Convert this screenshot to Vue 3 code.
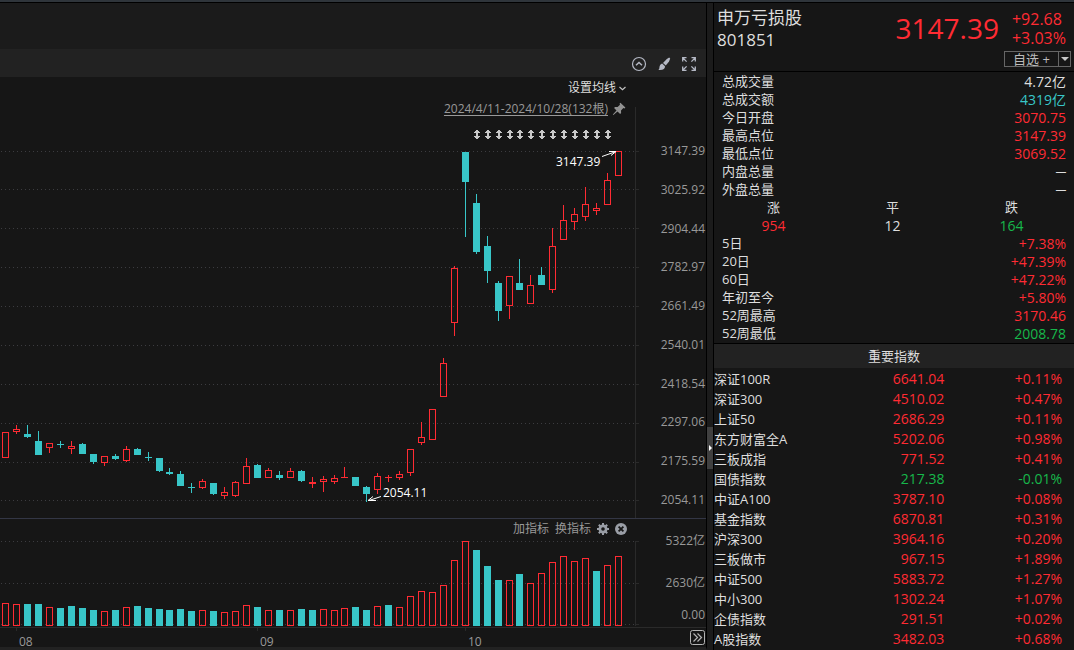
<script setup>
const RISE = 'rise'
const FALL = 'fall'

// [direction, high, body top, body bottom, low, volume direction, volume top]
const sessions = [
  ['r', 432, 432, 458, 458, 'r', 603],
  ['r', 425, 429, 432, 434, 'r', 604],
  ['f', 425, 434, 437, 438, 'f', 604],
  ['f', 431, 441, 455, 455, 'f', 604],
  ['r', 443, 443, 448, 453, 'r', 607],
  ['f', 441, 444, 445, 448, 'f', 608],
  ['r', 441, 446, 449, 454, 'f', 606],
  ['f', 443, 444, 454, 454, 'f', 608],
  ['f', 454, 454, 462, 464, 'f', 610],
  ['r', 456, 456, 463, 466, 'r', 611],
  ['f', 454, 456, 459, 460, 'f', 610],
  ['r', 446, 449, 461, 462, 'r', 607],
  ['f', 448, 449, 455, 455, 'f', 606],
  ['f', 452, 457, 458, 461, 'f', 608],
  ['f', 458, 458, 471, 472, 'f', 609],
  ['f', 468, 472, 474, 475, 'f', 610],
  ['f', 471, 474, 486, 486, 'f', 609],
  ['f', 483, 487, 488, 493, 'f', 611],
  ['r', 479, 481, 488, 489, 'r', 610],
  ['f', 483, 483, 494, 495, 'f', 611],
  ['r', 487, 492, 496, 499, 'r', 612],
  ['r', 481, 482, 496, 497, 'r', 611],
  ['r', 458, 466, 484, 484, 'r', 605],
  ['f', 464, 465, 478, 478, 'f', 607],
  ['r', 468, 470, 478, 478, 'r', 610],
  ['f', 471, 475, 478, 480, 'f', 610],
  ['r', 468, 471, 478, 478, 'r', 610],
  ['f', 470, 471, 481, 482, 'f', 609],
  ['r', 477, 482, 484, 488, 'f', 610],
  ['r', 476, 479, 482, 492, 'r', 609],
  ['r', 475, 478, 482, 484, 'r', 610],
  ['r', 467, 477, 478, 478, 'r', 608],
  ['f', 477, 477, 486, 486, 'f', 607],
  ['f', 486, 487, 494, 502, 'f', 610],
  ['r', 473, 476, 490, 494, 'r', 606],
  ['r', 475, 477, 478, 482, 'f', 605],
  ['r', 471, 474, 478, 480, 'r', 607],
  ['r', 449, 449, 473, 476, 'r', 596],
  ['r', 422, 437, 443, 445, 'r', 591],
  ['r', 409, 409, 440, 440, 'r', 592],
  ['r', 358, 363, 397, 397, 'r', 585],
  ['r', 266, 268, 323, 336, 'r', 560],
  ['f', 152, 152, 182, 237, 'r', 541],
  ['f', 194, 203, 252, 254, 'f', 550],
  ['f', 236, 246, 271, 283, 'f', 566],
  ['f', 281, 283, 311, 321, 'f', 580],
  ['r', 276, 276, 306, 319, 'r', 580],
  ['f', 259, 283, 290, 290, 'f', 574],
  ['r', 275, 285, 304, 304, 'r', 583],
  ['f', 267, 275, 285, 285, 'r', 573],
  ['r', 228, 246, 290, 293, 'r', 562],
  ['r', 205, 220, 240, 240, 'r', 556],
  ['r', 208, 214, 222, 230, 'r', 561],
  ['r', 187, 204, 217, 221, 'r', 558],
  ['r', 203, 208, 211, 215, 'f', 571],
  ['r', 173, 180, 205, 205, 'r', 565],
  ['r', 151, 151, 176, 176, 'r', 556],
].map(([dir, high, top, bottom, low, volDir, volTop], i) => ({
  x: 2 + 11 * i - Math.floor((i + 1) / 16),
  dir: dir === 'r' ? RISE : FALL,
  high, top, bottom, low,
  volDir: volDir === 'r' ? RISE : FALL,
  volTop,
}))

const box = (x, top, bottom) =>
  bottom - top < 2
    ? `M${x} ${top}h7v1h-7z`
    : `M${x} ${top}h7v${bottom - top}h-7zM${x + 1} ${top + 1}v${bottom - top - 2}h5v-${bottom - top - 2}z`
const solid = (x, top, bottom) => `M${x} ${top}h7v${bottom - top}h-7z`
const bodyPath = (s) => (s.dir === RISE ? box(s.x, s.top, s.bottom) : solid(s.x, s.top, s.bottom))
const volPath = (s) => (s.volDir === RISE ? box(s.x, s.volTop, 626) : solid(s.x, s.volTop, 626))
const wickPath = (s) =>
  `M${s.x + 3} ${s.high}h1v${s.top - s.high}h-1zM${s.x + 3} ${s.bottom}h1v${s.low - s.bottom}h-1z` +
  (s.bottom - s.top < 2 ? `M${s.x + 3} ${s.high}h1v${s.low - s.high}h-1z` : '')

const markers = sessions.slice(43, 56).map((s) => s.x - 8).map((x) => x + 11)
const priceGrid = [151, 189, 228, 267, 306, 345, 384, 423, 462, 500]
const priceLabels = ['3147.39', '3025.92', '2904.44', '2782.97', '2661.49', '2540.01', '2418.54', '2297.06', '2175.59', '2054.11']
const volumeGrid = [541, 583, 624]
const months = [
  { x: 16, label: '08' },
  { x: 257, label: '09' },
  { x: 465, label: '10' },
]

const quotes = [
  ['总成交量', '4.72亿', 'plain'],
  ['总成交额', '4319亿', 'cyan'],
  ['今日开盘', '3070.75', 'up'],
  ['最高点位', '3147.39', 'up'],
  ['最低点位', '3069.52', 'up'],
  ['内盘总量', '─', 'none'],
  ['外盘总量', '─', 'none'],
]
const breadth = [
  ['涨', '954', 'up'],
  ['平', '12', 'plain'],
  ['跌', '164', 'down'],
]
const periods = [
  ['5日', '+7.38%', 'up'],
  ['20日', '+47.39%', 'up'],
  ['60日', '+47.22%', 'up'],
  ['年初至今', '+5.80%', 'up'],
  ['52周最高', '3170.46', 'up'],
  ['52周最低', '2008.78', 'down'],
]
const indices = [
  ['深证100R', '6641.04', '+0.11%'],
  ['深证300', '4510.02', '+0.47%'],
  ['上证50', '2686.29', '+0.11%'],
  ['东方财富全A', '5202.06', '+0.98%'],
  ['三板成指', '771.52', '+0.41%'],
  ['国债指数', '217.38', '-0.01%'],
  ['中证A100', '3787.10', '+0.08%'],
  ['基金指数', '6870.81', '+0.31%'],
  ['沪深300', '3964.16', '+0.20%'],
  ['三板做市', '967.15', '+1.89%'],
  ['中证500', '5883.72', '+1.27%'],
  ['中小300', '1302.24', '+1.07%'],
  ['企债指数', '291.51', '+0.02%'],
  ['A股指数', '3482.03', '+0.68%'],
]
const tone = (pct) => (pct.startsWith('-') ? 'down' : 'up')
</script>

<template>
  <div class="app">
    <main class="chart-pane">
      <div class="blank"></div>
      <div class="toolbar">
        <button type="button" aria-label="收起">
          <svg width="16" height="16" viewBox="0 0 16 16" fill="none" stroke="#b4b8c4" stroke-width="1.2">
            <circle cx="8" cy="8" r="6.5" /><path d="M5 9.3 8 6.5l3 2.8" stroke-width="1.5" />
          </svg>
        </button>
        <button type="button" aria-label="画线">
          <svg width="16" height="16" viewBox="0 0 16 16" fill="#b4b8c4">
            <path d="M13.2 1.4 14.2 2.4 13 5.6 9.8 9.6 7 6.9 10.8 3z" />
            <path d="M6.2 7.6 9 10.3C9.2 12.6 7 14.6 2.4 14 4 12.8 3 11.6 3.8 9.8 4.4 8.4 5.5 7.9 6.2 7.6z" />
          </svg>
        </button>
        <button type="button" aria-label="全屏">
          <svg width="16" height="16" viewBox="0 0 16 16" fill="none" stroke="#b4b8c4" stroke-width="1.3">
            <path d="M1.7 5.5V1.7H5.5M2 2l3.6 3.6M10.5 1.7h3.8V5.5M14 2l-3.6 3.6M1.7 10.5v3.8H5.5M2 14l3.6-3.6M10.5 14.3h3.8V10.5M14 14l-3.6-3.6" />
          </svg>
        </button>
      </div>

      <section class="price">
        <div class="chart-head">
          <button type="button" class="ma">设置均线
            <svg width="7" height="5" viewBox="0 0 7 5" fill="none" stroke="#c4c4c4" stroke-width="1.2"><path d="M.5 1 3.5 3.6 6.5 1" /></svg>
          </button>
          <div class="range">
            <a href="#">2024/4/11-2024/10/28(132根)</a>
            <svg width="14" height="14" viewBox="0 0 14 14" fill="#929292">
              <path d="M8.4.8 13.4 5.6 12.6 6.5 11.4 6.1 9 8.6 9.1 11 8.1 12 5.5 9.4 1.4 13 .8 12.6 4.5 8.4 2.1 6 3 5 5.6 5.1 8 2.7 7.6 1.6z" />
            </svg>
          </div>
        </div>
        <svg class="plot" viewBox="0 77 640 441" role="img" aria-label="K线图">
          <path v-for="y in priceGrid" :key="y" :d="`M1 ${y + 0.5}H635`" class="dots" />
          <path d="M635.5 107V518" class="axis" />
          <path v-for="y in priceGrid" :key="'t' + y" :d="`M636 ${y + 0.5}h3`" class="axis" />
          <g v-for="s in sessions" :key="s.x" :class="s.dir">
            <path :d="wickPath(s)" /><path :d="bodyPath(s)" fill-rule="evenodd" />
          </g>
          <path
            v-for="x in markers" :key="'m' + x" class="marker"
            :d="`M${x} 130h2v1h1v1h1v1h-2v3h2v1h-1v1h-1v1h-2v-1h-1v-1h-1v-1h2v-3h-2v-1h1v-1h1z`"
          />
          <path d="M602 156.5 616 151.5M609 151.5h7l-5 4M381 496.5 369 500.5M373 496.5l-5 4h8" class="pointer" />
          <text x="556" y="166">3147.39</text>
          <text x="383" y="497">2054.11</text>
        </svg>
        <div class="scale price-scale">
          <span v-for="p in priceLabels" :key="p">{{ p }}</span>
        </div>
      </section>

      <section class="volume">
        <div class="indicator-bar">
          <button type="button">加指标</button>
          <button type="button">换指标</button>
          <button type="button" aria-label="设置">
            <svg width="12" height="12" viewBox="0 0 12 12">
              <circle cx="6" cy="6" r="3.2" fill="none" stroke="#9a9ea6" stroke-width="2.6" />
              <path d="M6 0v12M0 6h12M1.8 1.8l8.4 8.4M10.2 1.8 1.8 10.2" stroke="#9a9ea6" stroke-width="2" />
              <circle cx="6" cy="6" r="1.8" fill="#161616" />
            </svg>
          </button>
          <button type="button" aria-label="关闭">
            <svg width="12" height="12" viewBox="0 0 12 12">
              <circle cx="6" cy="6" r="6" fill="#9a9ea6" />
              <path d="m3.6 3.6 4.8 4.8m0-4.8L3.6 8.4" stroke="#161616" stroke-width="1.8" />
            </svg>
          </button>
        </div>
        <svg class="plot" viewBox="0 519 640 108" role="img" aria-label="成交量">
          <path v-for="y in volumeGrid" :key="y" :d="`M1 ${y + 0.5}H635`" class="dots" />
          <path d="M635.5 541V626" class="axis" />
          <path v-for="y in volumeGrid" :key="'t' + y" :d="`M636 ${y + 0.5}h3`" class="axis" />
          <path v-for="s in sessions" :key="s.x" :class="s.volDir" :d="volPath(s)" fill-rule="evenodd" />
        </svg>
        <div class="scale volume-scale">
          <span>5322亿</span><span>2630亿</span><span>0.00</span>
        </div>
      </section>

      <footer class="time">
        <svg class="plot" viewBox="0 628 640 19" role="img" aria-label="时间轴">
          <g v-for="m in months" :key="m.label">
            <path :d="`M${m.x + 0.5} 628v3`" class="axis" />
            <text class="month" :x="m.x + 3" y="646">{{ m.label }}</text>
          </g>
        </svg>
        <button type="button" class="more" aria-label="更多">
          <svg width="15" height="15" viewBox="0 0 15 15" fill="none" stroke="#b4b4b4">
            <rect x=".5" y=".5" width="14" height="14" rx="2" />
            <path d="m3.5 3.5 4 4-4 4M7.5 3.5l4 4-4 4" stroke-width="1.2" />
          </svg>
        </button>
      </footer>
    </main>

    <div class="splitter">
      <button type="button" aria-label="折叠侧栏">
        <svg width="3" height="6" viewBox="0 0 3 6"><path d="M0 0 3 3 0 6z" fill="#fff" /></svg>
      </button>
    </div>

    <aside class="side">
      <header class="head">
        <div class="title">
          <h1>申万亏损股<br>801851</h1>
          <strong class="up">3147.39</strong>
          <p class="up">+92.68<br>+3.03%</p>
        </div>
        <div class="watch">
          <button type="button" class="add">自选 +</button>
          <button type="button" class="drop" aria-label="选择分组">
            <svg width="8" height="4" viewBox="0 0 8 4"><path d="M0 0h8L4 4z" fill="#c8c8c8" /></svg>
          </button>
        </div>
      </header>

      <section class="stats">
        <dl>
          <div v-for="[k, v, c] in quotes" :key="k"><dt>{{ k }}</dt><dd :class="c">{{ v }}</dd></div>
        </dl>
        <dl class="breadth">
          <div v-for="[k, v, c] in breadth" :key="k"><dt>{{ k }}</dt><dd :class="c">{{ v }}</dd></div>
        </dl>
        <dl>
          <div v-for="[k, v, c] in periods" :key="k"><dt>{{ k }}</dt><dd :class="c">{{ v }}</dd></div>
        </dl>
      </section>

      <h2>重要指数</h2>
      <table>
        <tbody>
          <tr v-for="[name, value, pct] in indices" :key="name">
            <th scope="row">{{ name }}</th>
            <td class="value" :class="tone(pct)">{{ value }}</td>
            <td :class="tone(pct)">{{ pct }}</td>
          </tr>
        </tbody>
      </table>
    </aside>
  </div>
</template>

<style>
body {
  margin: 0;
  background: #161616;
}
</style>

<style scoped>
.app {
  box-sizing: border-box;
  display: flex;
  min-height: 100vh;
  border-top: 2px solid #2f353b;
  background: #161616;
  color: #dedede;
  font: 13px/18px "Open Sans", "Noto Sans CJK SC", sans-serif;
}
button {
  display: flex;
  align-items: center;
  justify-content: center;
  padding: 0;
  border: 0;
  background: none;
  color: inherit;
  font: inherit;
}
h1, h2, p, dl, dd {
  margin: 0;
  font-weight: 400;
}
.chart-pane {
  flex: 1;
  min-width: 0;
  display: flex;
  flex-direction: column;
  border-top: 1px solid #000;
  border-right: 1px solid #000;
  border-bottom: 3px solid #222;
}
.blank {
  height: 46px;
  background: #1b1b1b;
}
.toolbar {
  display: flex;
  align-items: center;
  justify-content: flex-end;
  gap: 9px;
  height: 28px;
  padding: 1px 9px 0 0;
  box-sizing: border-box;
  background: #222;
}
.price, .volume, .time {
  position: relative;
  display: flex;
}
.price {
  flex: 441;
}
.volume {
  flex: 108;
  border-top: 1px solid #333645;
  border-bottom: 1px solid #2a2a2a;
}
.time {
  height: 19px;
}
.plot {
  display: block;
  flex: 1;
  min-width: 0;
  overflow: visible;
}
.dots {
  stroke: #3c3c40;
  stroke-dasharray: 1 3;
}
.axis {
  stroke: #2a2a2a;
}
.rise {
  fill: #ff2b33;
}
.fall {
  fill: #38c6c8;
}
.marker {
  fill: #c8c8c8;
}
.pointer {
  fill: none;
  stroke: #fff;
}
text {
  fill: #fff;
  font-size: 12px;
}
.month {
  fill: #999;
}
.scale {
  display: flex;
  flex-direction: column;
  box-sizing: border-box;
  width: 66px;
  padding-right: 1px;
  color: #999;
  font-size: 12px;
  text-align: right;
}
.price-scale {
  justify-content: space-between;
  padding-top: 65px;
  padding-bottom: 9px;
}
.volume-scale {
  gap: 24px;
  padding-top: 13px;
}
.volume-scale span:last-child {
  margin-top: -10px;
}
.chart-head {
  position: absolute;
  top: 2px;
  right: 80px;
  display: flex;
  flex-direction: column;
  align-items: flex-end;
  gap: 3px;
  font-size: 12px;
}
.ma {
  gap: 3px;
}
.range {
  display: flex;
  align-items: center;
  gap: 4px;
}
.range a {
  color: #999;
  text-underline-offset: 2px;
}
.indicator-bar {
  position: absolute;
  top: 1px;
  right: 79px;
  display: flex;
  gap: 6px;
  color: #999;
  font-size: 12px;
}
.more {
  width: 66px;
  padding-right: 1px;
  justify-content: flex-end;
}
.splitter {
  display: flex;
  flex-direction: column;
  width: 6px;
  border-top: 1px solid #000;
  border-right: 1px solid #000;
  background: #1b1b1b;
}
.splitter::before {
  flex: 424;
  content: "";
}
.splitter::after {
  flex: 181;
  content: "";
}
.splitter button {
  height: 42px;
  background: #404040;
}
.side {
  width: 360px;
  border-top: 1px solid #000;
}
.head {
  box-sizing: border-box;
  height: 69px;
  border-bottom: 1px solid #000;
}
.title {
  display: flex;
  height: 48px;
  padding: 0 8px 0 3px;
}
h1 {
  flex: 1;
  padding-top: 4px;
  font-size: 17px;
  line-height: 22px;
}
strong {
  padding-top: 5px;
  font-size: 28px;
  font-weight: 400;
  line-height: 40px;
}
.title p {
  padding: 7px 0 0 13px;
  font-size: 16px;
  line-height: 19px;
}
.watch {
  display: flex;
  box-sizing: border-box;
  width: 67px;
  height: 16px;
  margin: 0 3px 0 auto;
  border: 1px solid #666;
}
.add {
  flex: 1;
  color: #bcbcbc;
}
.drop {
  width: 12px;
  border-left: 1px solid #666;
}
.up {
  color: #ff2b33;
}
.down {
  color: #16b84b;
}
.cyan {
  color: #38c6c8;
}
.none {
  font-family: "Liberation Sans", sans-serif;
}
.stats {
  padding: 1px 8px 0;
}
.stats dl > div {
  display: flex;
  justify-content: space-between;
  height: 18px;
}
.stats dt {
  line-height: 17px;
}
.stats dd {
  font-size: 14px;
}
.stats .breadth {
  display: grid;
  grid-template-columns: repeat(3, 1fr);
  margin: 0 -5px 0 -8px;
  text-align: center;
}
.stats .breadth > div {
  display: block;
  height: 36px;
}
.breadth dd {
  line-height: 19px;
}
h2 {
  height: 24px;
  border-top: 1px solid #000;
  background: #222;
  font-size: 13px;
  line-height: 24px;
  text-align: center;
}
table {
  width: 100%;
  margin-top: 1px;
  border-spacing: 0;
  table-layout: fixed;
}
th, td {
  height: 20px;
  padding: 0;
  line-height: 20px;
}
th {
  width: 35%;
  font-weight: 400;
  text-align: left;
  white-space: nowrap;
}
td {
  font-size: 14px;
  text-align: right;
}
.value {
  width: 29%;
}
td:last-child {
  padding-right: 12px;
}
</style>
